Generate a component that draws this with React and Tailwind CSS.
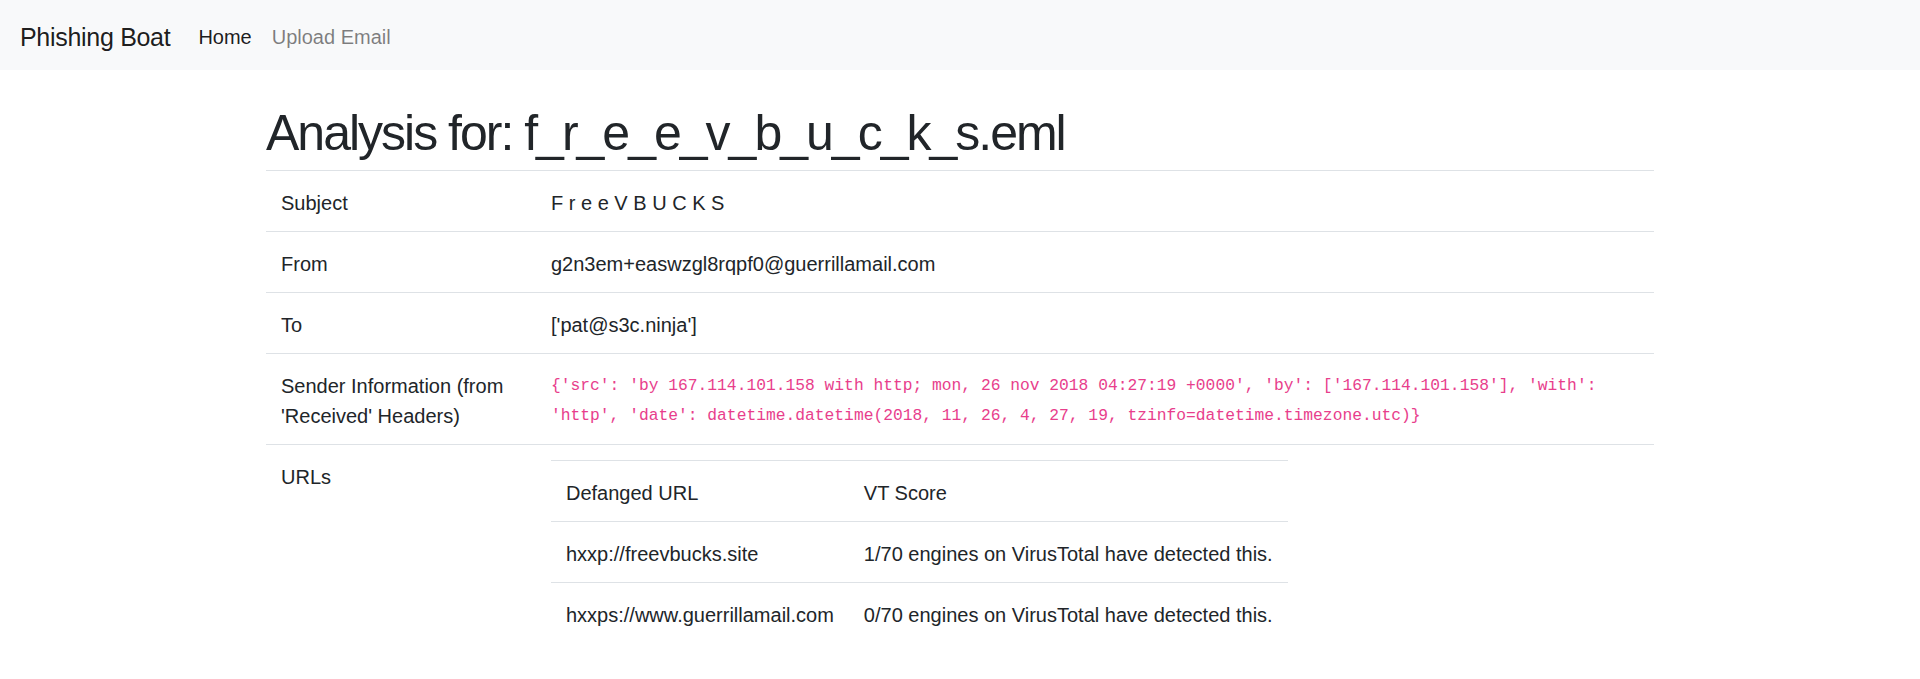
import React from 'react';

const FIELDS = [
  { label: 'Subject', value: 'F r e e V B U C K S' },
  { label: 'From', value: 'g2n3em+easwzgl8rqpf0@guerrillamail.com' },
  { label: 'To', value: "['pat@s3c.ninja']" },
];

const SENDER =
  "{'src': 'by 167.114.101.158 with http; mon, 26 nov 2018 04:27:19 +0000', 'by': ['167.114.101.158'], 'with': 'http', 'date': datetime.datetime(2018, 11, 26, 4, 27, 19, tzinfo=datetime.timezone.utc)}";

const URLS = [
  { url: 'hxxp://freevbucks.site', score: '1/70 engines on VirusTotal have detected this.' },
  { url: 'hxxps://www.guerrillamail.com', score: '0/70 engines on VirusTotal have detected this.' },
];

const cell = 'px-[15px] pt-[17px] pb-[13px] border-t border-[#dee2e6] align-top text-left';

export default function App() {
  return (
    <div className="min-h-screen bg-white text-[#212529] text-[20px] leading-[30px] font-['Liberation_Sans',Arial,sans-serif]">
      {/* Navbar */}
      <nav className="flex items-center h-[70px] px-[20px] pt-[4px] bg-[#f8f9fa]">
        <span className="text-[25px] leading-[37px] mr-[18px] tracking-[-0.3px] text-black/90">Phishing Boat</span>
        <a className="px-[10px] text-black/90">Home</a>
        <a className="px-[10px] text-black/50">Upload Email</a>
      </nav>

      <div className="w-[1388px] mx-auto">
        <h1 className="mt-[33px] mb-[7px] text-[50px] leading-[60px] font-normal tracking-[-2px]">
          Analysis for: f_r_e_e_v_b_u_c_k_s.eml
        </h1>

        <table className="w-full border-collapse mb-[20px]">
          <tbody>
            {FIELDS.map((f) => (
              <tr key={f.label}>
                <td className={`${cell} w-[270px]`}>{f.label}</td>
                <td className={cell}>{f.value}</td>
              </tr>
            ))}
            <tr>
              <td className={`${cell} w-[270px]`}>Sender Information (from 'Received' Headers)</td>
              <td className={cell}>
                <code className="block text-[#e83e8c] text-[16.3px] leading-[30px] font-['Liberation_Mono',monospace] break-words">
                  {SENDER}
                </code>
              </td>
            </tr>
            <tr>
              <td className={`${cell} w-[270px]`}>URLs</td>
              <td className="px-[15px] pt-[15px] pb-[15px] border-t border-[#dee2e6] align-top text-left">
                <table className="border-collapse">
                  <tbody>
                    <tr>
                      <td className={cell}>Defanged URL</td>
                      <td className={cell}>VT Score</td>
                    </tr>
                    {URLS.map((u) => (
                      <tr key={u.url}>
                        <td className={cell}>{u.url}</td>
                        <td className={cell}>{u.score}</td>
                      </tr>
                    ))}
                  </tbody>
                </table>
              </td>
            </tr>
          </tbody>
        </table>
      </div>
    </div>
  );
}
